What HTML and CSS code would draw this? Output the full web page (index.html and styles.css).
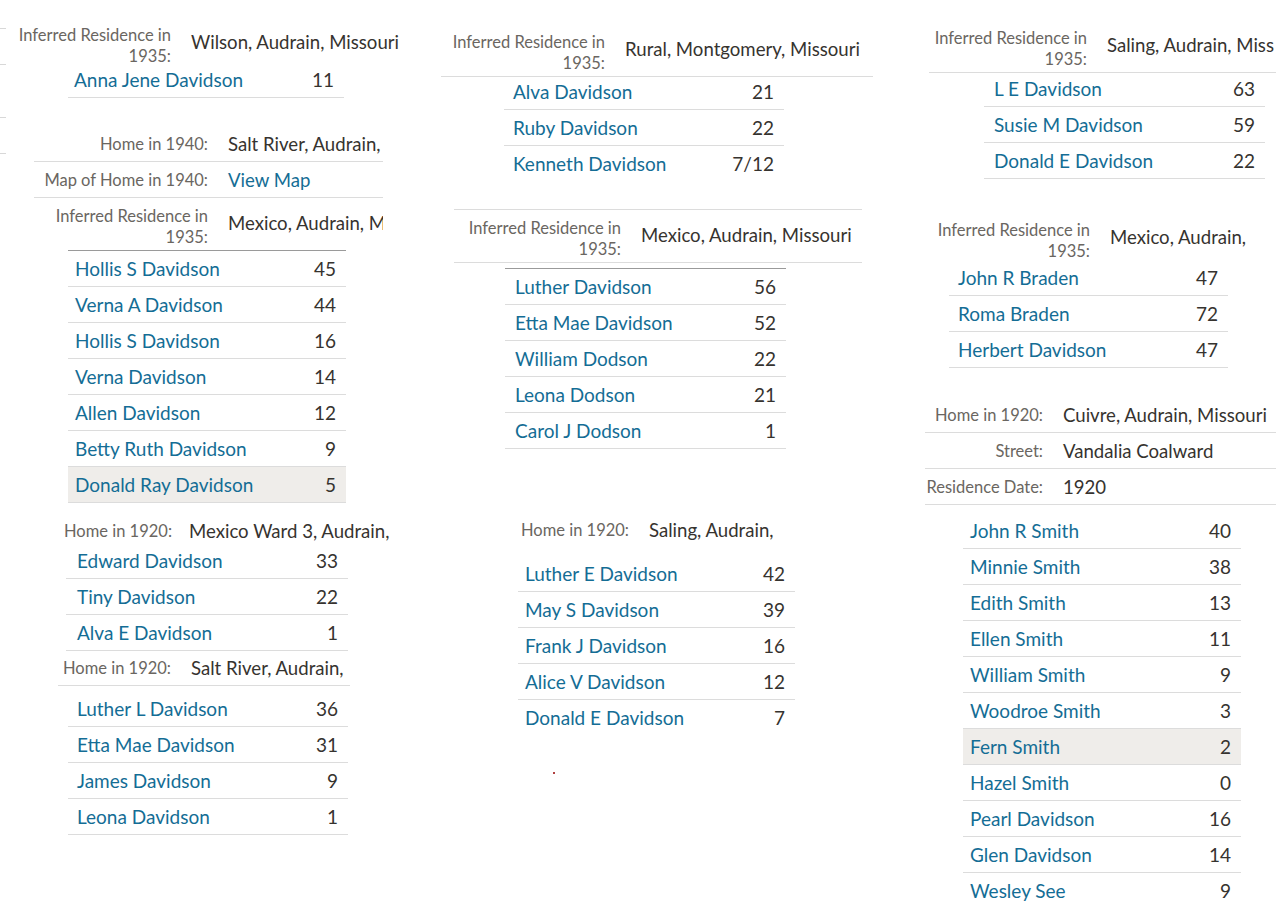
FILE: index.html
```html
<!DOCTYPE html>
<html lang="en">
<head>
<meta charset="utf-8">
<title>Census household records</title>
<link rel="stylesheet" href="styles.css">
</head>
<body>
<div class="canvas">

  <div class="edge">
    <i class="tick t1"></i><i class="tick t2"></i><i class="tick t3"></i><i class="tick t4"></i>
  </div>

  <section class="frag fa">
    <div class="fact two nb"><div class="l">Inferred Residence in<br>1935:</div><div class="v">Wilson, Audrain, Missouri</div></div>
    <div class="hh">
      <div class="r"><a class="n">Anna Jene Davidson</a><span class="a">11</span></div>
    </div>
  </section>

  <section class="frag fb">
    <div class="fact one"><div class="l">Home in 1940:</div><div class="v">Salt River, Audrain,</div></div>
    <div class="fact one"><div class="l">Map of Home in 1940:</div><div class="v"><a class="n">View Map</a></div></div>
    <div class="fact two nb"><div class="l">Inferred Residence in<br>1935:</div><div class="v">Mexico, Audrain, M</div></div>
    <div class="hh top">
      <div class="r"><a class="n">Hollis S Davidson</a><span class="a">45</span></div>
      <div class="r"><a class="n">Verna A Davidson</a><span class="a">44</span></div>
      <div class="r"><a class="n">Hollis S Davidson</a><span class="a">16</span></div>
      <div class="r"><a class="n">Verna Davidson</a><span class="a">14</span></div>
      <div class="r"><a class="n">Allen Davidson</a><span class="a">12</span></div>
      <div class="r"><a class="n">Betty Ruth Davidson</a><span class="a">9</span></div>
      <div class="r sel"><a class="n">Donald Ray Davidson</a><span class="a">5</span></div>
    </div>
  </section>

  <section class="frag fc">
    <div class="fact one nb"><div class="l">Home in 1920:</div><div class="v">Mexico Ward 3, Audrain,</div></div>
    <div class="hh">
      <div class="r"><a class="n">Edward Davidson</a><span class="a">33</span></div>
      <div class="r"><a class="n">Tiny Davidson</a><span class="a">22</span></div>
      <div class="r"><a class="n">Alva E Davidson</a><span class="a">1</span></div>
    </div>
  </section>

  <section class="frag fd">
    <div class="fact one"><div class="l">Home in 1920:</div><div class="v">Salt River, Audrain,</div></div>
    <div class="hh">
      <div class="r"><a class="n">Luther L Davidson</a><span class="a">36</span></div>
      <div class="r"><a class="n">Etta Mae Davidson</a><span class="a">31</span></div>
      <div class="r"><a class="n">James Davidson</a><span class="a">9</span></div>
      <div class="r"><a class="n">Leona Davidson</a><span class="a">1</span></div>
    </div>
  </section>

  <section class="frag fe">
    <div class="fact two"><div class="l">Inferred Residence in<br>1935:</div><div class="v">Rural, Montgomery, Missouri</div></div>
    <div class="hh">
      <div class="r"><a class="n">Alva Davidson</a><span class="a">21</span></div>
      <div class="r"><a class="n">Ruby Davidson</a><span class="a">22</span></div>
      <div class="r last"><a class="n">Kenneth Davidson</a><span class="a">7/12</span></div>
    </div>
  </section>

  <section class="frag ff">
    <div class="fact two"><div class="l">Inferred Residence in<br>1935:</div><div class="v">Mexico, Audrain, Missouri</div></div>
    <div class="hh top">
      <div class="r"><a class="n">Luther Davidson</a><span class="a">56</span></div>
      <div class="r"><a class="n">Etta Mae Davidson</a><span class="a">52</span></div>
      <div class="r"><a class="n">William Dodson</a><span class="a">22</span></div>
      <div class="r"><a class="n">Leona Dodson</a><span class="a">21</span></div>
      <div class="r"><a class="n">Carol J Dodson</a><span class="a">1</span></div>
    </div>
  </section>

  <section class="frag fg">
    <div class="fact one nb"><div class="l">Home in 1920:</div><div class="v">Saling, Audrain,</div></div>
    <div class="hh">
      <div class="r"><a class="n">Luther E Davidson</a><span class="a">42</span></div>
      <div class="r"><a class="n">May S Davidson</a><span class="a">39</span></div>
      <div class="r"><a class="n">Frank J Davidson</a><span class="a">16</span></div>
      <div class="r"><a class="n">Alice V Davidson</a><span class="a">12</span></div>
      <div class="r last"><a class="n">Donald E Davidson</a><span class="a">7</span></div>
    </div>
  </section>

  <i class="speck"></i>

  <section class="frag fh">
    <div class="fact two"><div class="l">Inferred Residence in<br>1935:</div><div class="v">Saling, Audrain, Miss</div></div>
    <div class="hh">
      <div class="r"><a class="n">L E Davidson</a><span class="a">63</span></div>
      <div class="r"><a class="n">Susie M Davidson</a><span class="a">59</span></div>
      <div class="r"><a class="n">Donald E Davidson</a><span class="a">22</span></div>
    </div>
  </section>

  <section class="frag fi">
    <div class="fact two nb"><div class="l">Inferred Residence in<br>1935:</div><div class="v">Mexico, Audrain,</div></div>
    <div class="hh">
      <div class="r"><a class="n">John R Braden</a><span class="a">47</span></div>
      <div class="r"><a class="n">Roma Braden</a><span class="a">72</span></div>
      <div class="r"><a class="n">Herbert Davidson</a><span class="a">47</span></div>
    </div>
  </section>

  <section class="frag fj">
    <div class="fact one"><div class="l">Home in 1920:</div><div class="v">Cuivre, Audrain, Missouri</div></div>
    <div class="fact one"><div class="l">Street:</div><div class="v">Vandalia Coalward</div></div>
    <div class="fact one"><div class="l">Residence Date:</div><div class="v">1920</div></div>
    <div class="hh">
      <div class="r"><a class="n">John R Smith</a><span class="a">40</span></div>
      <div class="r"><a class="n">Minnie Smith</a><span class="a">38</span></div>
      <div class="r"><a class="n">Edith Smith</a><span class="a">13</span></div>
      <div class="r"><a class="n">Ellen Smith</a><span class="a">11</span></div>
      <div class="r"><a class="n">William Smith</a><span class="a">9</span></div>
      <div class="r"><a class="n">Woodroe Smith</a><span class="a">3</span></div>
      <div class="r sel"><a class="n">Fern Smith</a><span class="a">2</span></div>
      <div class="r"><a class="n">Hazel Smith</a><span class="a">0</span></div>
      <div class="r"><a class="n">Pearl Davidson</a><span class="a">16</span></div>
      <div class="r"><a class="n">Glen Davidson</a><span class="a">14</span></div>
      <div class="r last"><a class="n">Wesley See</a><span class="a">9</span></div>
    </div>
  </section>

</div>
</body>
</html>
```

FILE: styles.css
```css
html, body {
  margin: 0;
  padding: 0;
  background: #fff;
}

body {
  font-family: Lato, "Liberation Sans", sans-serif;
  color: #36332f;
}

.canvas {
  position: relative;
  width: 1276px;
  height: 921px;
  overflow: hidden;
  background: #fff;
}

/* each clipped record fragment sits on the collage canvas */
.frag {
  position: absolute;
  overflow: hidden;
  --lw: 160px;
  --np: 9px;
}

/* fact rows: label / value */
.fact {
  display: grid;
  grid-template-columns: var(--lw) max-content;
  column-gap: 20px;
  padding: 8px 0 2px;
  border-bottom: 1px solid #dcdcdc;
}
.fact.one {
  padding: 8px 0 6px;
}
.fact.nb {
  border-bottom: 0;
}
.fact .l {
  font-size: 16.5px;
  line-height: 21px;
  color: #6a6661;
  text-align: right;
  white-space: nowrap;
}
.fact .v {
  font-size: 18.6px;
  line-height: 21px;
  padding-top: 7px;
  color: #36332f;
  white-space: nowrap;
}
.fact.one .v {
  padding-top: 0;
}

a.n {
  color: #146d95;
  text-decoration: none;
}

/* household member rows */
.hh.top {
  border-top: 1px solid #9a9a9a;
}
.hh .r {
  display: flex;
  justify-content: space-between;
  height: 35px;
  line-height: 36px;
  font-size: 19px;
  padding: 0 10px 0 var(--np);
  border-bottom: 1px solid #dcdcdc;
  white-space: nowrap;
}
.hh .r.last {
  border-bottom-color: transparent;
}
.hh .r.sel {
  background: #efedea;
}
.hh .a {
  color: #36332f;
}

/* fragment placement */
.fa { left: 10px; top: 17px; width: 392px; --lw: 161px; --np: 6px; }
.fa .hh { margin: -7px 0 0 58px; width: 276px; }

.fb { left: 34px; top: 126px; width: 349px; --lw: 174px; --np: 7px; }
.fb .hh { margin-left: 34px; width: 278px; }

.fc { left: 64px; top: 513px; width: 330px; --lw: 105px; --np: 11px; }
.fc .hh { margin: -5px 0 0 2px; width: 282px; }

.fd { left: 58px; top: 650px; width: 292px; --lw: 113px; --np: 9px; }
.fd .hh { margin: 5px 0 0 10px; width: 280px; }

.fe { left: 441px; top: 24px; width: 432px; --lw: 164px; --np: 9px; }
.fe .hh { margin: -3px 0 0 63px; width: 280px; }

.ff { left: 454px; top: 209px; width: 408px; --lw: 167px; --np: 10px; border-top: 1px solid #dcdcdc; }
.ff .hh { margin: 5px 0 0 51px; width: 281px; }

.fg { left: 518px; top: 512px; width: 277px; --lw: 111px; --np: 7px; }
.fg .hh { margin-top: 9px; width: 277px; }

.fh { left: 929px; top: 20px; width: 347px; --lw: 158px; --np: 10px; }
.fh .hh { margin: -2px 0 0 55px; width: 281px; }

.fi { left: 937px; top: 212px; width: 339px; --lw: 153px; --np: 9px; }
.fi .hh { margin: -4px 0 0 12px; width: 279px; }

.fj { left: 925px; top: 397px; width: 351px; --lw: 118px; --np: 7px; }
.fj .hh { margin: 8px 0 0 38px; width: 278px; }

/* stray marks left over at the collage edges */
.edge {
  position: absolute;
  left: 0;
  top: 20px;
  width: 6px;
  height: 140px;
}
.tick {
  position: absolute;
  left: 0;
  width: 6px;
  height: 1px;
  background: #d8d8d8;
}
.t1 { top: 8px; }
.t2 { top: 44px; }
.t3 { top: 97px; }
.t4 { top: 133px; }

.speck {
  position: absolute;
  left: 553px;
  top: 772px;
  width: 2px;
  height: 2px;
  background: #b04040;
}
```
